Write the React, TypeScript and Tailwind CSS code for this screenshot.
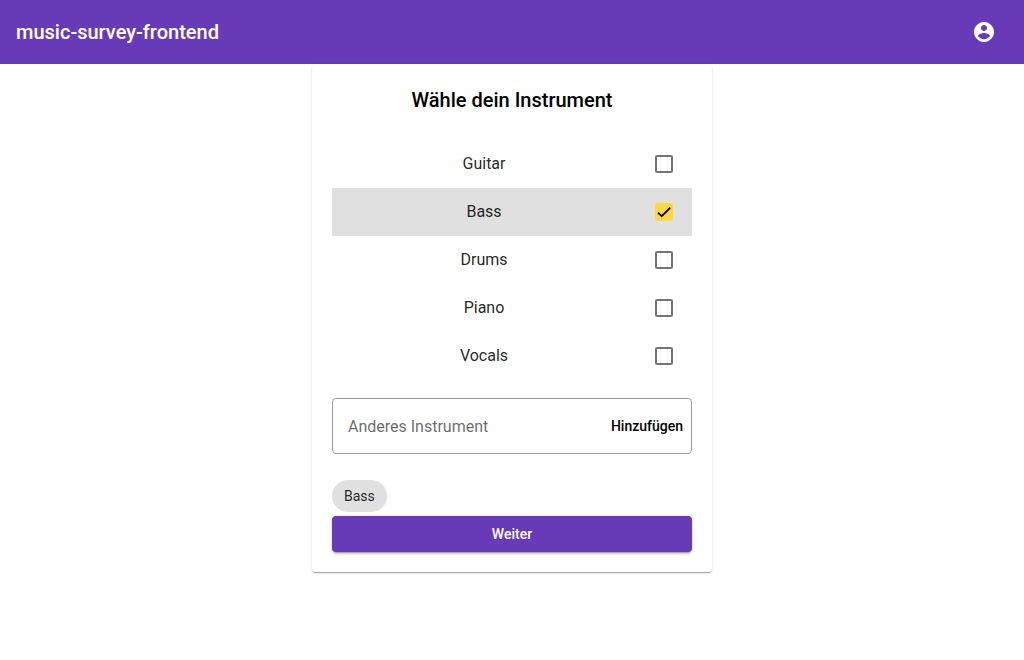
import { useState } from "react";
import type { FormEvent } from "react";

const PRESETS = ["Guitar", "Bass", "Drums", "Piano", "Vocals"];

function AccountIcon() {
  return (
    <svg viewBox="0 0 24 24" className="size-6 fill-current" aria-hidden="true">
      <path d="M12 2C6.48 2 2 6.48 2 12s4.48 10 10 10 10-4.48 10-10S17.52 2 12 2zm0 3c1.66 0 3 1.34 3 3s-1.34 3-3 3-3-1.34-3-3 1.34-3 3-3zm0 14.2c-2.5 0-4.71-1.28-6-3.22.03-1.99 4-3.08 6-3.08 1.99 0 5.97 1.09 6 3.08-1.29 1.94-3.5 3.22-6 3.22z" />
    </svg>
  );
}

function Toolbar() {
  return (
    <header className="flex h-16 items-center justify-between bg-[#673ab7] px-4 text-white">
      <span className="text-xl font-medium">music-survey-frontend</span>
      <button type="button" aria-label="Account" className="grid size-12 place-items-center rounded-full">
        <AccountIcon />
      </button>
    </header>
  );
}

interface OptionProps {
  name: string;
  checked: boolean;
  onToggle: () => void;
}

function InstrumentOption({ name, checked, onToggle }: OptionProps) {
  const id = `instrument-${name}`;
  return (
    <li className="flex h-12 items-center gap-6 pr-2 pl-4 has-checked:bg-[#e0e0e0]">
      <label htmlFor={id} className="flex-1 cursor-pointer pb-px text-center text-base text-black/87">
        {name}
      </label>
      <span className="relative grid size-10 place-items-center">
        <input
          id={id}
          type="checkbox"
          checked={checked}
          onChange={onToggle}
          className="size-[18px] cursor-pointer appearance-none rounded-xs border-2 border-black/54 checked:border-[#ffd740] checked:bg-[#ffd740]"
        />
        {checked && (
          <svg
            viewBox="0 0 24 24"
            className="pointer-events-none absolute inset-0 m-auto size-[14px] fill-none stroke-black"
            aria-hidden="true"
          >
            <path d="M1.73 12.91 8.1 19.28 22.79 4.59" strokeWidth="3.12" />
          </svg>
        )}
      </span>
    </li>
  );
}

export default function App() {
  const [options, setOptions] = useState<string[]>(PRESETS);
  const [selected, setSelected] = useState<string[]>(["Bass"]);
  const [custom, setCustom] = useState("");

  const toggle = (name: string) =>
    setSelected((current) =>
      current.includes(name) ? current.filter((item) => item !== name) : [...current, name],
    );

  const addCustom = (event: FormEvent) => {
    event.preventDefault();
    const name = custom.trim();
    if (!name) return;
    if (!options.includes(name)) setOptions([...options, name]);
    if (!selected.includes(name)) setSelected([...selected, name]);
    setCustom("");
  };

  return (
    <div className="min-h-screen bg-white font-['Roboto',sans-serif] text-black">
      <Toolbar />
      <main className="mx-auto w-full max-w-[400px] rounded-sm bg-white p-5 shadow-[0_2px_1px_-1px_rgba(0,0,0,0.2),0_1px_1px_0_rgba(0,0,0,0.14),0_1px_3px_0_rgba(0,0,0,0.12)]">
        <h1 className="text-center text-xl/8 font-medium">Wähle dein Instrument</h1>
        <ul className="mt-6">
          {options.map((name) => (
            <InstrumentOption
              key={name}
              name={name}
              checked={selected.includes(name)}
              onToggle={() => toggle(name)}
            />
          ))}
        </ul>
        <form
          onSubmit={addCustom}
          className="mt-[18px] flex h-14 items-center rounded-sm border border-black/38 pr-2 pl-[15px]"
        >
          <input
            type="text"
            aria-label="Anderes Instrument"
            placeholder="Anderes Instrument"
            value={custom}
            onChange={(event) => setCustom(event.target.value)}
            className="h-full min-w-0 flex-1 bg-transparent text-base text-black/87 outline-none placeholder:text-black/60"
          />
          <button type="submit" className="h-9 text-sm font-medium text-black">
            Hinzufügen
          </button>
        </form>
        <ul className="mt-[26px] flex flex-wrap gap-2">
          {selected.map((name) => (
            <li key={name} className="flex h-8 items-center rounded-full bg-[#e0e0e0] px-3 text-sm text-black/87">
              {name}
            </li>
          ))}
        </ul>
        <button
          type="button"
          className="mt-1 h-9 w-full rounded-sm bg-[#673ab7] text-sm font-medium text-white shadow-[0_3px_1px_-2px_rgba(0,0,0,0.2),0_2px_2px_0_rgba(0,0,0,0.14),0_1px_5px_0_rgba(0,0,0,0.12)]"
        >
          Weiter
        </button>
      </main>
    </div>
  );
}
